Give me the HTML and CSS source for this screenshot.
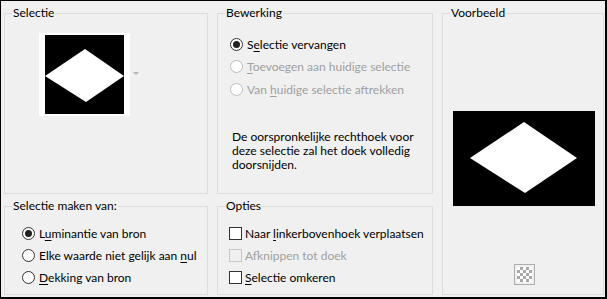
FILE: index.html
```html
<!DOCTYPE html>
<html lang="nl">
<head>
<meta charset="utf-8">
<link rel="stylesheet" href="styles.css">
</head>
<body>
<div class="dialog">
  <fieldset class="group sel">
    <legend>Selectie</legend>
    <div class="sel-body">
      <div class="thumb">
        <svg width="79" height="79" viewBox="0 0 79 79"><rect width="79" height="79" fill="#000"/><polygon points="40,14 79,41 41,67 0,41" fill="#fff"/></svg>
      </div>
      <svg class="drop" width="6" height="4" viewBox="0 0 6 4"><polygon points="0,0 6,0 3,3" fill="#b4b4b4"/></svg>
    </div>
  </fieldset>

  <fieldset class="group edit">
    <legend>Bewerking</legend>
    <div class="edit-body">
      <div class="row"><span class="radio on"></span><span>S<u>e</u>lectie vervangen</span></div>
      <div class="row off"><span class="radio"></span><span><u>T</u>oevoegen aan huidige selectie</span></div>
      <div class="row off"><span class="radio"></span><span>Van <u>h</u>uidige selectie aftrekken</span></div>
      <p class="desc">De oorspronkelijke rechthoek voor<br>deze selectie zal het doek volledig<br>doorsnijden.</p>
    </div>
  </fieldset>

  <fieldset class="group preview">
    <legend>Voorbeeld</legend>
    <div class="preview-body">
      <svg class="big" width="142" height="95" viewBox="0 0 142 95"><rect width="142" height="95" fill="#000"/><polygon points="71,11 124,47 72,82 17,47" fill="#fff"/></svg>
      <span class="checker"><span class="checker-in"></span></span>
    </div>
  </fieldset>

  <fieldset class="group make">
    <legend>Selectie maken van:</legend>
    <div class="list">
      <div class="row"><span class="radio on"></span><span>L<u>u</u>minantie van bron</span></div>
      <div class="row"><span class="radio"></span><span>Elke waarde niet gelijk aan <u>n</u>ul</span></div>
      <div class="row"><span class="radio"></span><span><u>D</u>ekking van bron</span></div>
    </div>
  </fieldset>

  <fieldset class="group opt">
    <legend>Opties</legend>
    <div class="list">
      <div class="row"><span class="check"></span><span>Naar <u>l</u>inkerbovenhoek verplaatsen</span></div>
      <div class="row off"><span class="check"></span><span>Af<u>k</u>nippen tot doek</span></div>
      <div class="row"><span class="check"></span><span><u>S</u>electie omkeren</span></div>
    </div>
  </fieldset>
</div>
</body>
</html>
```

FILE: styles.css
```css
* { box-sizing: border-box; }
html, body { margin: 0; padding: 0; background: #f0f0f0; }
body {
  font-family: Lato, "Noto Sans", sans-serif;
  font-size: 12px;
  color: #000;
}
.dialog {
  width: 607px;
  height: 299px;
  border-style: solid;
  border-color: #000;
  border-width: 1px 2px 2px 1px;
  background: #f0f0f0;
  padding: 5px 0 0 3px;
  display: grid;
  grid-template-columns: 204px 216px 162px;
  grid-template-rows: 188px 96px;
  column-gap: 9px;
  row-gap: 5px;
}
.group {
  margin: 0;
  padding: 0;
  min-width: 0;
  border: 1px solid #dcdcdc;
}
.group legend {
  margin-left: 7px;
  padding: 0 1px;
  line-height: 14px;
  font-size: 12px;
}
.sel { grid-column: 1; grid-row: 1; }
.edit { grid-column: 2; grid-row: 1; }
.preview { grid-column: 3; grid-row: 1 / span 2; }
.make { grid-column: 1; grid-row: 2; }
.opt { grid-column: 2; grid-row: 2; }

.sel-body {
  display: flex;
  align-items: center;
  padding: 13px 0 0 34px;
}
.thumb {
  width: 91px;
  height: 83px;
  background: #fff;
  display: flex;
  align-items: center;
  justify-content: center;
}
.thumb svg { display: block; }
.drop { display: block; margin-left: 3px; margin-top: -2px; }

.edit-body { padding: 13px 0 0 12px; }
.row {
  display: flex;
  align-items: center;
  height: 22.5px;
  white-space: nowrap;
}
.row u { text-decoration-thickness: 1px; text-underline-offset: 2px; }
.row.off { color: #a0a0a0; }
.radio {
  width: 13px;
  height: 13px;
  border: 1px solid #333;
  border-radius: 50%;
  background: #fff;
  margin-right: 4px;
  display: flex;
  align-items: center;
  justify-content: center;
  flex: none;
}
.radio.on::after {
  content: "";
  width: 7px;
  height: 7px;
  border-radius: 50%;
  background: #222;
}
.row.off .radio { border-color: #bcbcbc; }
.check {
  width: 13px;
  height: 13px;
  border: 1px solid #333;
  background: #fff;
  margin-right: 3px;
  flex: none;
}
.row.off .check { border-color: #c8c8c8; background: #f0f0f0; }
.desc {
  margin: 29px 0 0 2px;
  white-space: nowrap;
  line-height: 14px;
}

.make .list { padding: 9px 0 0 17px; }
.make .row { height: 22px; }
.opt .list { padding: 9px 0 0 11px; }
.opt .row { height: 22px; }

.preview-body {
  display: flex;
  flex-direction: column;
  align-items: center;
  padding: 91px 0 0 2px;
}
.big { display: block; }
.checker {
  margin-top: 58px;
  width: 21px;
  height: 21px;
  border: 1px solid #adadad;
  background: #f0f0f0;
  padding: 2px;
  display: block;
}
.checker-in {
  display: block;
  width: 15px;
  height: 15px;
  background-color: #fff;
  background-image: conic-gradient(#a8a8a8 25%, transparent 0 50%, #a8a8a8 0 75%, transparent 0);
  background-size: 6px 6px;
}
```
